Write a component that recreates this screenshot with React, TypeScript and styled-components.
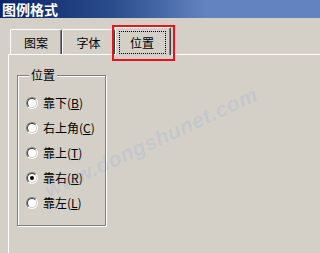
import React from "react";
import styled, { createGlobalStyle } from "styled-components";

const Global = createGlobalStyle`
  html, body { margin: 0; padding: 0; background: #d4d0c8; }
  body { font-family: "Noto Sans CJK SC", "Liberation Sans", sans-serif; }
`;

const Window = styled.div`
  position: relative;
  width: 100%;
  min-width: 206px;
  height: 253px;
  overflow: hidden;
  background: #d4d0c8;
  display: flex;
  flex-direction: column;
`;

const TitleBar = styled.div`
  height: 18px;
  flex: none;
  display: flex;
  align-items: center;
  padding-left: 2px;
  background-color: #6383c0;
  background-image: linear-gradient(to right, #0a246a 0%, #2b4d8c 55%, #6383c0 100%);
  background-size: 206px 18px;
  background-repeat: no-repeat;
  color: #fff;
  font-weight: bold;
  font-size: 14px;
  line-height: 18px;
`;

const Body = styled.div`
  flex: 1;
  display: flex;
  flex-direction: column;
  padding: 9px 0 0 8px;
`;

const TabStrip = styled.div`
  display: flex;
  align-items: flex-end;
  height: 28px;
  padding-left: 2px;
  position: relative;
  z-index: 1;
  margin-bottom: -1px;
`;

const Tab = styled.div<{ $selected?: boolean; $w: number }>`
  position: relative;
  box-sizing: border-box;
  width: ${(p) => p.$w}px;
  height: ${(p) => (p.$selected ? 28 : 25)}px;
  margin-bottom: ${(p) => (p.$selected ? 0 : 1)}px;
  background: #d4d0c8;
  border-top: 1px solid #fff;
  border-left: 1px solid #fff;
  border-right: 1px solid #404040;
  box-shadow: inset -1px 0 0 #808080;
  border-radius: 2px 2px 0 0;
  display: flex;
  align-items: ${(p) => (p.$selected ? "flex-start" : "center")};
  justify-content: center;
  font-size: 12px;
  color: #000;
  padding-top: ${(p) => (p.$selected ? 3 : 0)}px;
`;

const Focus = styled.span`
  box-sizing: border-box;
  width: 47px;
  height: 23px;
  margin-right: 2px;
  border: 1px dotted #000;
  display: flex;
  align-items: center;
  justify-content: center;
  line-height: 14px;
`;

const Highlight = styled.span`
  position: absolute;
  left: -4px;
  top: -3px;
  width: 63px;
  height: 36px;
  box-sizing: border-box;
  border: 2px solid #e8141c;
  pointer-events: none;
`;

const Panel = styled.div`
  flex: 1;
  border-top: 1px solid #fff;
  border-left: 1px solid #fff;
  padding-left: 8px;
  padding-top: 13px;
`;

const GroupBox = styled.fieldset`
  box-sizing: border-box;
  width: 89px;
  margin: 0;
  padding: 8px 0 10px 8px;
  border: 1px solid #808080;
  box-shadow: inset 1px 1px 0 #fff, 1px 1px 0 #fff;
  display: flex;
  flex-direction: column;
`;

const Legend = styled.legend`
  margin-left: 3px;
  padding: 0 2px;
  font-size: 12px;
  line-height: 14px;
  background: #d4d0c8;
  position: relative;
`;

const Row = styled.label`
  display: flex;
  align-items: center;
  height: 25px;
  gap: 5px;
  font-size: 12px;
  color: #000;
`;

const RadioOuter = styled.span`
  box-sizing: border-box;
  width: 12px;
  height: 12px;
  border-radius: 50%;
  border: 1px solid;
  border-color: #808080 #fff #fff #808080;
  display: flex;
`;

const RadioInner = styled.span<{ $on?: boolean }>`
  box-sizing: border-box;
  flex: 1;
  border-radius: 50%;
  border: 1px solid;
  border-color: #404040 #d4d0c8 #d4d0c8 #404040;
  background: #fff;
  display: flex;
  align-items: center;
  justify-content: center;
  &::after {
    content: "";
    width: 4px;
    height: 4px;
    border-radius: 50%;
    background: #000;
    display: ${(p) => (p.$on ? "block" : "none")};
  }
`;

const Key = styled.span`
  text-decoration: underline;
  text-underline-offset: 1px;
`;

const Watermark = styled.div`
  position: absolute;
  left: 36px;
  top: 135px;
  width: 210px;
  text-align: center;
  transform: rotate(-25deg);
  font-family: "Liberation Sans", sans-serif;
  font-style: italic;
  font-weight: bold;
  font-size: 21px;
  letter-spacing: 0.5px;
  color: rgba(110, 155, 220, 0.16);
  pointer-events: none;
  white-space: nowrap;
`;

const options = [
  { label: "靠下", key: "B", on: false },
  { label: "右上角", key: "C", on: false },
  { label: "靠上", key: "T", on: false },
  { label: "靠右", key: "R", on: true },
  { label: "靠左", key: "L", on: false },
];

export default function App() {
  return (
    <>
      <Global />
      <Window>
        <TitleBar>图例格式</TitleBar>
        <Body>
          <TabStrip>
            <Tab $w={52}>图案</Tab>
            <Tab $w={53}>字体</Tab>
            <Tab $w={56} $selected>
              <Focus>位置</Focus>
              <Highlight />
            </Tab>
          </TabStrip>
          <Panel>
            <GroupBox>
              <Legend>位置</Legend>
              {options.map((o) => (
                <Row key={o.key}>
                  <RadioOuter>
                    <RadioInner $on={o.on} />
                  </RadioOuter>
                  <span>
                    {o.label}(<Key>{o.key}</Key>)
                  </span>
                </Row>
              ))}
            </GroupBox>
          </Panel>
        </Body>
        <Watermark>www.dongshunet.com</Watermark>
      </Window>
    </>
  );
}
